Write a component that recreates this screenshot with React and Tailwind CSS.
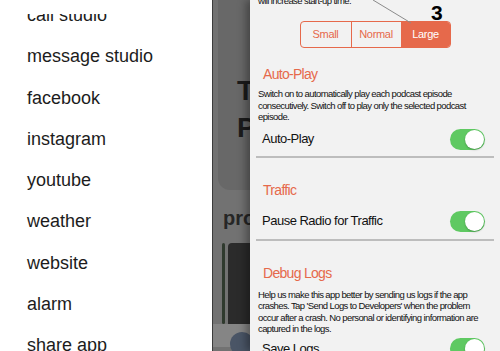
import React from "react";

const menuItems = [
  "call studio",
  "message studio",
  "facebook",
  "instagram",
  "youtube",
  "weather",
  "website",
  "alarm",
  "share app",
];

const Toggle = () => (
  <div className="w-[35px] h-[21px] rounded-full bg-[#5fc962] flex items-center justify-end pr-[1px]">
    <div className="w-[19px] h-[19px] rounded-full bg-white shadow-[0_1px_2px_rgba(0,0,0,0.25)]" />
  </div>
);

const SettingRow = ({ label, className }) => (
  <div className={`flex items-center justify-between pl-[12px] pr-[15px] ${className}`}>
    <span className="text-[13px] tracking-[-0.5px] text-[#111]">{label}</span>
    <Toggle />
  </div>
);

const App = () => {
  return (
    <div
      className="relative flex w-[500px] h-[351px] overflow-hidden bg-white"
      style={{ fontFamily: '"Liberation Sans", Arial, sans-serif' }}
    >
      {/* Side menu */}
      <aside className="w-[212px] shrink-0 bg-white pt-[14px]">
        <div className="h-[337px] overflow-hidden">
          <ul className="-mt-[19px]">
            {menuItems.map((item) => (
              <li
                key={item}
                className="h-[41.25px] leading-[41.25px] pl-[27px] text-[18px] text-[#1c1c1c]"
              >
                {item}
              </li>
            ))}
          </ul>
        </div>
      </aside>

      {/* Dimmed screen behind the panel */}
      <div className="w-[38px] shrink-0 overflow-hidden bg-[#727272] border-l border-[#3c3c3c]">
        <div className="w-[120px] flex flex-col">
          <div className="ml-[5px] h-[190px] rounded-bl-[12px] bg-[#686868] pl-[19px] pt-[72px] text-[28px] font-bold leading-[37px] text-[#1b1b1b]">
            <div>To</div>
            <div>Po</div>
          </div>
          <div className="pl-[10px] mt-[16px] text-[20px] font-bold leading-[24px] text-[#262626]">
            pro
          </div>
          <div className="flex mt-[13px] h-[81px] pl-[9px] gap-[3px]">
            <div className="w-[3px] bg-[#2f3a2e] rounded-full" />
            <div className="flex-1 bg-[#2b2b2b] rounded-tl-[4px]" />
          </div>
          <div className="h-[23px] bg-[#858585] pl-[17px] pt-[8px]">
            <div className="w-[24px] h-[24px] rounded-full bg-[#4a5566]" />
          </div>
        </div>
      </div>

      {/* Settings panel */}
      <section className="flex-1 bg-[#f2f2f2] shadow-[-4px_0_8px_rgba(0,0,0,0.35)] text-[#111]">
        <div className="h-[21px] overflow-hidden">
          <p className="-mt-[5px] pl-[8px] text-[9.5px] tracking-[-0.6px] leading-[11.5px]">
            will increase start-up time.
          </p>
        </div>

        <div className="flex justify-center">
          <div className="flex h-[27px] border border-[#e6694b] rounded-[4px] overflow-hidden text-[11px] tracking-[-0.3px]">
            <div className="w-[50px] flex items-center justify-center text-[#e6694b]">Small</div>
            <div className="w-[50px] flex items-center justify-center text-[#e6694b] border-l border-[#e6694b]">Normal</div>
            <div className="w-[49px] flex items-center justify-center text-white bg-[#e6694b] border-l border-[#e6694b]">Large</div>
          </div>
        </div>

        <h3 className="mt-[16px] h-[20px] leading-[20px] pl-[13px] text-[14px] tracking-[-0.7px] text-[#e6694b] font-normal">
          Auto-Play
        </h3>
        <p className="mt-[4px] pl-[8px] pr-[4px] text-[9.5px] tracking-[-0.6px] leading-[11.5px]">
          Switch on to automatically play each podcast episode
          <br />
          consecutively. Switch off to play only the selected podcast
          <br />
          episode.
        </p>
        <SettingRow label="Auto-Play" className="h-[33px]" />
        <div className="mx-[6px] h-[2px] bg-[#bdbdbd]" />

        <h3 className="mt-[22px] h-[20px] leading-[20px] pl-[13px] text-[14px] tracking-[-0.7px] text-[#e6694b] font-normal">
          Traffic
        </h3>
        <SettingRow label="Pause Radio for Traffic" className="mt-[4px] h-[35px]" />
        <div className="mx-[6px] h-[2px] bg-[#bdbdbd]" />

        <h3 className="mt-[22px] h-[20px] leading-[20px] pl-[13px] text-[14px] tracking-[-0.7px] text-[#e6694b] font-normal">
          Debug Logs
        </h3>
        <p className="mt-[6px] pl-[8px] pr-[4px] text-[9.5px] tracking-[-0.6px] leading-[11.5px]">
          Help us make this app better by sending us logs if the app
          <br />
          crashes. Tap 'Send Logs to Developers' when the problem
          <br />
          occur after a crash. No personal or identifying information are
          <br />
          captured in the logs.
        </p>
        <SettingRow label="Save Logs" className="h-[28px]" />
      </section>

      {/* Annotation marker */}
      <svg className="absolute left-0 top-0 pointer-events-none" width="500" height="30">
        <line x1="373" y1="0" x2="411" y2="23" stroke="#8a8a8a" strokeWidth="1" />
      </svg>
      <span className="absolute left-[431px] top-[1px] text-[21px] font-bold leading-[24px] text-black">
        3
      </span>
    </div>
  );
};

export default App;
